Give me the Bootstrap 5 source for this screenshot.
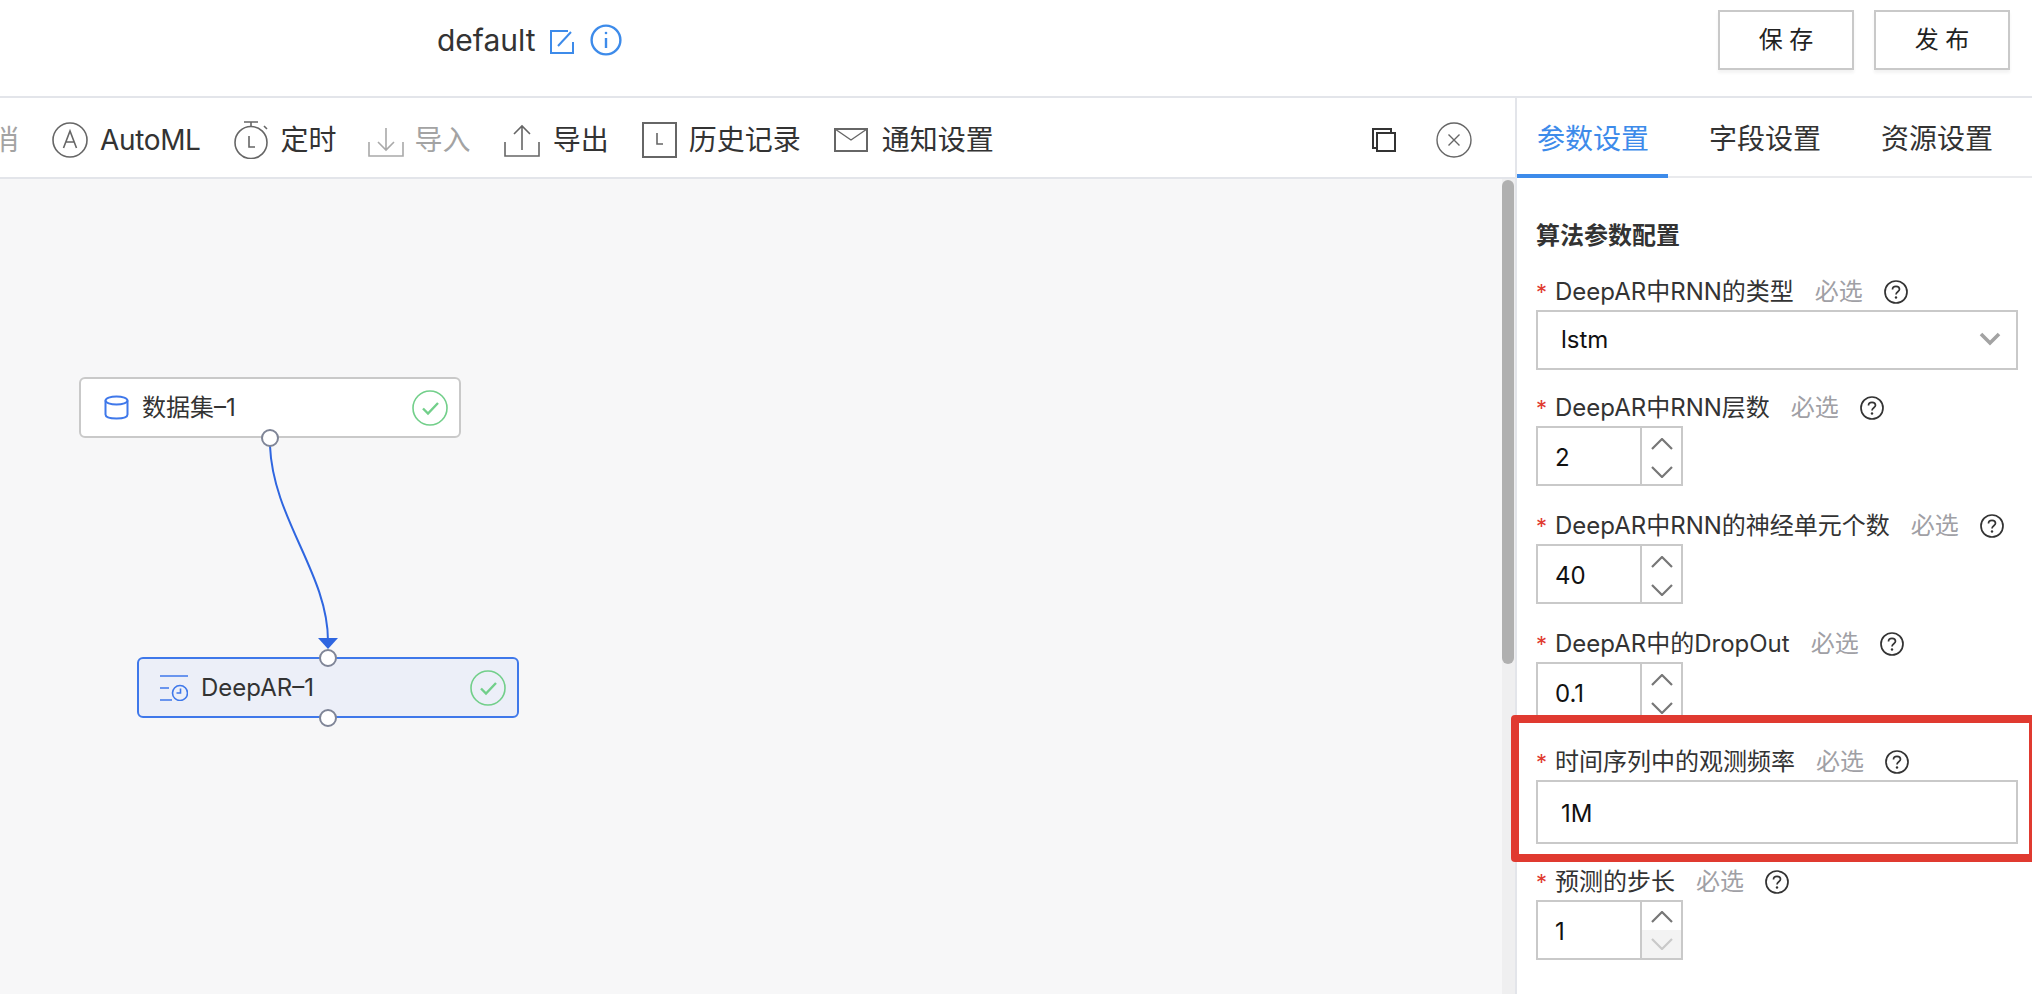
<!DOCTYPE html>
<html lang="zh">
<head>
<meta charset="utf-8">
<title>default</title>
<link href="https://cdn.jsdelivr.net/npm/bootstrap@5.3.0/dist/css/bootstrap.min.css" rel="stylesheet">
<style>
html,body{height:100%;}
body{width:2032px;height:994px;overflow:hidden;background:#fff;color:#333;font-family:"Inter","Noto Sans CJK SC",sans-serif;font-size:24px;}
svg{display:block;flex:none;}
.top-bar{height:98px;border-bottom:2px solid #e3e5ea;padding-left:437px;padding-right:22px;padding-bottom:17px;}
.doc-name{font-size:30px;line-height:1;margin-right:14px;}
.top-btn{width:136px;height:60px;border:2px solid #c9c9c9;border-radius:0;background:#fff;color:#222;font-size:24px;line-height:1;padding:0;box-shadow:0 3px 3px #f3f3f3;margin-left:20px;}
.top-btn:hover{background:#fff;border-color:#c9c9c9;color:#222;}
.work-area{height:896px;}
.canvas-col{width:1515px;min-width:1515px;overflow:hidden;}
.tool-strip{height:81px;border-bottom:2px solid #e3e5ea;gap:33px;padding-right:43px;font-size:28px;white-space:nowrap;padding-top:4px;}
.tool-item{gap:12px;}
.tool-off{color:#a3a3a3;}
.cut-word{margin-left:-37px;}
.auto-word{letter-spacing:-.35px;}
.tool-pull{margin-left:-2px;gap:11px;}
.tool-wide{gap:13px;}
.tool-wider{gap:14px;}
.copy-mark{margin-right:7px;}
.board-row{height:815px;}
.flow-board{width:1502px;height:815px;background:#f7f7f8;position:relative;}
.flow-node{position:absolute;width:382px;height:61px;border:2px solid #c9c9c9;border-radius:6px;background:#fff;font-size:24px;}
.node-a{left:79px;top:198px;padding-left:23px;gap:13px;}
.node-b{left:137px;top:478px;background:#eceff8;border-color:#3f78ea;padding-left:21px;gap:13px;}
.node-ok{position:absolute;right:11px;top:11px;}
.flow-port{position:absolute;width:18px;height:18px;border-radius:50%;background:#fff;border:2px solid #7f8597;}
.flow-wire{position:absolute;left:0;top:0;}
.scroll-rail{width:13px;background:#efeff0;padding:1px 1px 0 0;}
.scroll-thumb{width:12px;height:484px;background:#b0b0b0;border-radius:6px;}
.side-panel{width:517px;border-left:2px solid #e3e5ea;height:896px;overflow:hidden;}
.tab-strip{height:80px;border-bottom:2px solid #e9eaed;}
.tab-link{height:80px;font-size:28px;color:#333;padding:6px 19px 0 20px;line-height:1;margin-right:21px;white-space:nowrap;margin-bottom:-2px;border-bottom:4px solid transparent;}
.tab-link:hover{color:#333;}
.tab-on,.tab-on:hover{color:#3d8bea;border-bottom-color:#3d8bea;}
.form-wrap{padding:40px 14px 0 19px;}
.sec-title{font-size:24px;font-weight:700;line-height:36px;margin-bottom:20px;color:#333;}
.fld-label{height:36px;line-height:36px;font-size:24px;white-space:nowrap;}
.req{color:#e03a30;width:19px;flex:none;font-size:22px;}
.must{color:#a0a0a5;margin-left:21px;margin-right:21px;font-size:24px;}
.fld{margin-bottom:22px;}
.fld-tight{margin-bottom:20px;}
.ctl,.ctl:focus{height:60px;border:2px solid #c9c9c9;border-radius:0;font-size:24px;color:#111;padding:0 0 0 23px;box-shadow:none;background-color:#fff;}
.ctl-tall,.ctl-tall:focus{height:64px;padding-top:2px;}
.form-select.ctl{background-image:none;}
.sel-arrow{position:absolute;right:17px;top:58px;}
.spin-box{width:147px;height:60px;border:2px solid #c9c9c9;background:#fff;}
.spin-box input{width:104px;height:56px;border:0;outline:0;padding:2px 0 0 17px;font-size:24px;color:#111;background:transparent;border-right:2px solid #c9c9c9;}
.spin-btns{flex:1;}
.spin-half{height:28px;}
.spin-lift{padding-top:2px;}
.spin-off{background:#f3f3f3;}
.mark-box{position:absolute;left:1511px;top:715px;width:526px;height:147px;border:8px solid #e03a30;border-radius:4px;pointer-events:none;}
</style>
</head>
<body class="position-relative">

<header class="top-bar d-flex align-items-center">
  <span class="doc-name">default</span>
  <svg class="mt-1" width="24" height="24" viewBox="0 0 24 24" fill="none" stroke="#3d8bea" stroke-width="2"><path d="M23 12V23H1V1H18"/><path d="M8 16L21 2"/></svg>
  <svg class="ms-3" width="32" height="32" viewBox="0 0 32 32" fill="none" stroke="#3d8bea" stroke-width="2.4"><circle cx="16" cy="16" r="14.4"/><path d="M16 14V24"/><circle cx="16" cy="9" r="1.3" fill="#3d8bea" stroke="none"/></svg>
  <div class="ms-auto d-flex">
    <button class="btn top-btn" type="button">保 存</button>
    <button class="btn top-btn" type="button">发 布</button>
  </div>
</header>

<div class="work-area d-flex">
  <section class="canvas-col">
    <div class="tool-strip d-flex align-items-center">
      <span class="tool-off cut-word">撤消</span>
      <div class="tool-item d-flex align-items-center">
        <svg width="36" height="36" viewBox="0 0 36 36" fill="none" stroke="#666" stroke-width="1.6"><circle cx="18" cy="18" r="17"/><path d="M11.5 26L18 9L24.5 26M14 20H22"/></svg>
        <span class="auto-word">AutoML</span>
      </div>
      <div class="tool-item d-flex align-items-center">
        <svg width="35" height="38" viewBox="0 0 35 38" fill="none" stroke="#666" stroke-width="1.6"><circle cx="17" cy="21.500" r="16"/><path d="M10 1H24M17 1V5M30 5L33 8M15 15V26H21"/></svg>
        <span>定时</span>
      </div>
      <div class="tool-item tool-pull tool-off d-flex align-items-center">
        <svg width="36" height="36" viewBox="0 0 36 36" fill="none" stroke="#a9a9a9" stroke-width="1.6"><path d="M1 20V34H35V20"/><path d="M18 6V28M10 20L18 28L26 20"/></svg>
        <span>导入</span>
      </div>
      <div class="tool-item tool-wide d-flex align-items-center">
        <svg width="36" height="36" viewBox="0 0 36 36" fill="none" stroke="#666" stroke-width="1.6"><path d="M1 20V34H35V20"/><path d="M18 28V4M10 12L18 4L26 12"/></svg>
        <span>导出</span>
      </div>
      <div class="tool-item d-flex align-items-center">
        <svg width="35" height="36" viewBox="0 0 35 36" fill="none" stroke="#666" stroke-width="2"><rect x="1" y="1" width="33" height="34"/><path d="M15 11V22H21" stroke-width="1.6"/></svg>
        <span>历史记录</span>
      </div>
      <div class="tool-item tool-wider d-flex align-items-center">
        <svg width="34" height="24" viewBox="0 0 34 24" fill="none" stroke="#666" stroke-width="2"><rect x="1" y="1" width="32" height="22"/><path d="M1 1L17 12L33 1" stroke-width="1.4"/></svg>
        <span>通知设置</span>
      </div>
      <svg class="ms-auto copy-mark" width="24" height="24" viewBox="0 0 24 24" fill="none" stroke="#333" stroke-width="2"><rect x="5" y="5" width="18" height="18"/><path d="M5 20H1V1H19V5"/></svg>
      <svg width="36" height="36" viewBox="0 0 36 36" fill="none" stroke="#666" stroke-width="1.4"><circle cx="18" cy="18" r="17"/><path d="M12.500 12.500L23.500 23.500M23.500 12.500L12.500 23.500"/></svg>
    </div>
    <div class="board-row d-flex">
    <div class="flow-board">
      <svg class="flow-wire" width="500" height="500" viewBox="0 0 500 500" fill="none"><path d="M270 267C273 340 328 395 328 462" stroke="#2f66e0" stroke-width="2"/><path d="M318 459H338L328 470Z" fill="#2f66e0"/></svg>
      <div class="flow-node node-a d-flex align-items-center">
        <svg width="25" height="25" viewBox="0 0 25 25" fill="none" stroke="#3f78ea" stroke-width="2"><ellipse cx="12.500" cy="5.500" rx="11" ry="4"/><path d="M1.500 5.500V19.500C1.500 22 6 23.500 12.500 23.500S23.500 22 23.500 19.500V5.500"/></svg>
        <span>数据集–1</span>
        <svg class="node-ok" width="36" height="36" viewBox="0 0 36 36" fill="none" stroke="#72cf8a"><circle cx="18" cy="18" r="17" stroke-width="1.6"/><path d="M11 18.500L16 23.500L26 13" stroke-width="2.4"/></svg>
      </div>
      <span class="flow-port" style="left:261px;top:250px"></span>
      <div class="flow-node node-b d-flex align-items-center">
        <svg width="28" height="26" viewBox="0 0 28 26" fill="none" stroke="#3f78ea" stroke-width="1.6"><path d="M0 1H28M0 13H9M0 25H12"/><circle cx="20" cy="18" r="7.500"/><path d="M20.500 13.500V18H16.500"/></svg>
        <span>DeepAR–1</span>
        <svg class="node-ok" width="36" height="36" viewBox="0 0 36 36" fill="none" stroke="#72cf8a"><circle cx="18" cy="18" r="17" stroke-width="1.6"/><path d="M11 18.500L16 23.500L26 13" stroke-width="2.4"/></svg>
      </div>
      <span class="flow-port" style="left:319px;top:470px"></span>
      <span class="flow-port" style="left:319px;top:530px"></span>
    </div>
    <div class="scroll-rail"><div class="scroll-thumb"></div></div>
    </div>
  </section>

  <aside class="side-panel">
    <nav class="tab-strip d-flex">
      <a class="tab-link tab-on d-flex align-items-center text-decoration-none" href="#">参数设置</a>
      <a class="tab-link d-flex align-items-center text-decoration-none" href="#">字段设置</a>
      <a class="tab-link d-flex align-items-center text-decoration-none" href="#">资源设置</a>
    </nav>
    <form class="form-wrap" onsubmit="return false">
      <div class="sec-title">算法参数配置</div>

      <div class="fld fld-tight position-relative">
        <div class="fld-label d-flex align-items-center"><span class="req">*</span><span>DeepAR中RNN的类型</span><span class="must">必选</span><svg width="24" height="24" viewBox="0 0 24 24"><use href="#qmark"/></svg></div>
        <select class="form-select ctl"><option>lstm</option></select>
        <svg class="sel-arrow" width="22" height="14" viewBox="0 0 22 14" fill="none" stroke="#a3a3a3" stroke-width="3.600"><path d="M2 2L11 11L20 2"/></svg>
      </div>

      <div class="fld">
        <div class="fld-label d-flex align-items-center"><span class="req">*</span><span>DeepAR中RNN层数</span><span class="must">必选</span><svg width="24" height="24" viewBox="0 0 24 24"><use href="#qmark"/></svg></div>
        <div class="spin-box d-flex"><input type="text" value="2"><div class="spin-btns spin-lift"><div class="spin-half d-flex justify-content-center align-items-center"><svg width="22" height="12" viewBox="0 0 22 12" fill="none" stroke="#777" stroke-width="2.200"><path d="M1 11L11 1L21 11"/></svg></div><div class="spin-half d-flex justify-content-center align-items-center"><svg width="22" height="12" viewBox="0 0 22 12" fill="none" stroke="#777" stroke-width="2.200"><path d="M1 1L11 11L21 1"/></svg></div></div></div>
      </div>

      <div class="fld">
        <div class="fld-label d-flex align-items-center"><span class="req">*</span><span>DeepAR中RNN的神经单元个数</span><span class="must">必选</span><svg width="24" height="24" viewBox="0 0 24 24"><use href="#qmark"/></svg></div>
        <div class="spin-box d-flex"><input type="text" value="40"><div class="spin-btns spin-lift"><div class="spin-half d-flex justify-content-center align-items-center"><svg width="22" height="12" viewBox="0 0 22 12" fill="none" stroke="#777" stroke-width="2.200"><path d="M1 11L11 1L21 11"/></svg></div><div class="spin-half d-flex justify-content-center align-items-center"><svg width="22" height="12" viewBox="0 0 22 12" fill="none" stroke="#777" stroke-width="2.200"><path d="M1 1L11 11L21 1"/></svg></div></div></div>
      </div>

      <div class="fld">
        <div class="fld-label d-flex align-items-center"><span class="req">*</span><span>DeepAR中的DropOut</span><span class="must">必选</span><svg width="24" height="24" viewBox="0 0 24 24"><use href="#qmark"/></svg></div>
        <div class="spin-box d-flex"><input type="text" value="0.1"><div class="spin-btns spin-lift"><div class="spin-half d-flex justify-content-center align-items-center"><svg width="22" height="12" viewBox="0 0 22 12" fill="none" stroke="#777" stroke-width="2.200"><path d="M1 11L11 1L21 11"/></svg></div><div class="spin-half d-flex justify-content-center align-items-center"><svg width="22" height="12" viewBox="0 0 22 12" fill="none" stroke="#777" stroke-width="2.200"><path d="M1 1L11 11L21 1"/></svg></div></div></div>
      </div>

      <div class="fld fld-tight">
        <div class="fld-label d-flex align-items-center"><span class="req">*</span><span>时间序列中的观测频率</span><span class="must">必选</span><svg width="24" height="24" viewBox="0 0 24 24"><use href="#qmark"/></svg></div>
        <input class="form-control ctl ctl-tall" type="text" value="1M">
      </div>

      <div class="fld">
        <div class="fld-label d-flex align-items-center"><span class="req">*</span><span>预测的步长</span><span class="must">必选</span><svg width="24" height="24" viewBox="0 0 24 24"><use href="#qmark"/></svg></div>
        <div class="spin-box d-flex"><input type="text" value="1"><div class="spin-btns"><div class="spin-half spin-lift d-flex justify-content-center align-items-center"><svg width="22" height="12" viewBox="0 0 22 12" fill="none" stroke="#777" stroke-width="2.200"><path d="M1 11L11 1L21 11"/></svg></div><div class="spin-half spin-off d-flex justify-content-center align-items-center"><svg width="22" height="12" viewBox="0 0 22 12" fill="none" stroke="#c9c9c9" stroke-width="2.200"><path d="M1 1L11 11L21 1"/></svg></div></div></div>
      </div>
    </form>
  </aside>
</div>

<div class="mark-box"></div>

<svg width="0" height="0" class="position-absolute"><defs><g id="qmark"><circle cx="12" cy="12" r="11" fill="none" stroke="#333" stroke-width="1.700"/><path d="M8.500 9.500C8.500 7.500 10 6.300 12 6.300S15.500 7.500 15.500 9.300C15.500 11.800 12 11.800 12 14.500" fill="none" stroke="#333" stroke-width="1.700"/><circle cx="12" cy="17.500" r="1.200" fill="#333"/></g></defs></svg>

<script src="https://cdn.jsdelivr.net/npm/bootstrap@5.3.0/dist/js/bootstrap.bundle.min.js"></script>
</body>
</html>
